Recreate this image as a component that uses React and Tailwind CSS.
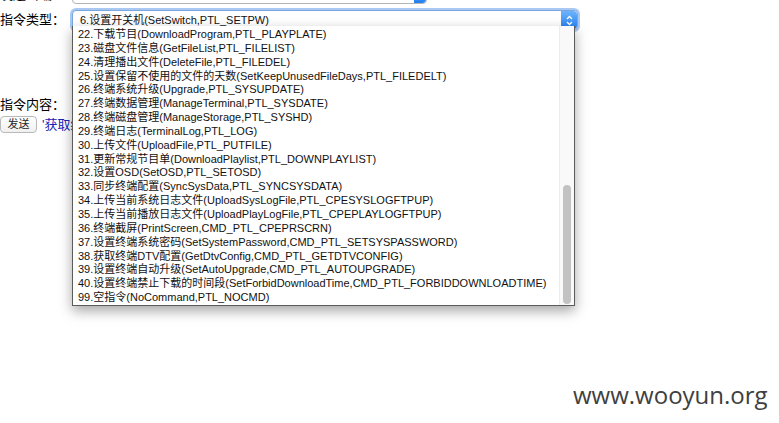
import React from 'react'

const items = [
  '22.下载节目(DownloadProgram,PTL_PLAYPLATE)',
  '23.磁盘文件信息(GetFileList,PTL_FILELIST)',
  '24.清理播出文件(DeleteFile,PTL_FILEDEL)',
  '25.设置保留不使用的文件的天数(SetKeepUnusedFileDays,PTL_FILEDELT)',
  '26.终端系统升级(Upgrade,PTL_SYSUPDATE)',
  '27.终端数据管理(ManageTerminal,PTL_SYSDATE)',
  '28.终端磁盘管理(ManageStorage,PTL_SYSHD)',
  '29.终端日志(TerminalLog,PTL_LOG)',
  '30.上传文件(UploadFile,PTL_PUTFILE)',
  '31.更新常规节目单(DownloadPlaylist,PTL_DOWNPLAYLIST)',
  '32.设置OSD(SetOSD,PTL_SETOSD)',
  '33.同步终端配置(SyncSysData,PTL_SYNCSYSDATA)',
  '34.上传当前系统日志文件(UploadSysLogFile,PTL_CPESYSLOGFTPUP)',
  '35.上传当前播放日志文件(UploadPlayLogFile,PTL_CPEPLAYLOGFTPUP)',
  '36.终端截屏(PrintScreen,CMD_PTL_CPEPRSCRN)',
  '37.设置终端系统密码(SetSystemPassword,CMD_PTL_SETSYSPASSWORD)',
  '38.获取终端DTV配置(GetDtvConfig,CMD_PTL_GETDTVCONFIG)',
  '39.设置终端自动升级(SetAutoUpgrade,CMD_PTL_AUTOUPGRADE)',
  '40.设置终端禁止下载的时间段(SetForbidDownloadTime,CMD_PTL_FORBIDDOWNLOADTIME)',
  '99.空指令(NoCommand,PTL_NOCMD)',
]

const sans = "font-['Liberation_Sans','Noto_Sans_CJK_SC',sans-serif]"

// the little blue up/down button of a mac select
function Arrows({ cls }) {
  return (
    <div className={'flex items-center justify-center rounded-r-[4px] bg-gradient-to-b from-[#6cb3fa] to-[#1f7ef0] ' + cls}>
      <svg width="7" height="11" viewBox="0 0 7 11" fill="none" stroke="white" strokeWidth="1.4">
        <path d="M1 4 L3.5 1.5 L6 4" />
        <path d="M1 7 L3.5 9.5 L6 7" />
      </svg>
    </div>
  )
}

export default function App() {
  return (
    <div className={'relative w-[779px] h-[423px] overflow-hidden bg-white text-black ' + sans}>
      {/* row 1, mostly scrolled out */}
      <div className="flex items-center mt-[-15px] h-[19px]">
        <div className="w-[72px] text-[13px] leading-[19px]">发送终端：</div>
        <div className="flex h-[19px] w-[355px] items-stretch rounded-[4px] border border-[#b5b5b5] bg-white">
          <div className="flex-1 pl-[7px] text-[11px] leading-[17px] text-[#222]">10.0.1.215-10.00(在线运行终端)</div>
          <Arrows cls="w-[12px]" />
        </div>
      </div>

      {/* row 2 */}
      <div className="flex items-center mt-[6px] h-[20px]">
        <div className="w-[72px] text-[13px] leading-[20px]">指令类型：</div>
        <div className="flex h-[20px] w-[506px] items-stretch rounded-[4px] border border-[#7aa6e0] bg-white shadow-[0_0_0_2px_#a9c9f3]">
          <div className="flex-1 pl-[7px] text-[11px] leading-[18px] text-[#111]">6.设置开关机(SetSwitch,PTL_SETPW)</div>
          <Arrows cls="w-[16px]" />
        </div>
      </div>

      {/* content row */}
      <div className="mt-[66px] text-[13px] leading-[18px] w-[72px]">指令内容：</div>
      <div className="flex items-center gap-[5px] mt-[1px]">
        <button className="h-[17px] w-[37px] rounded-[4px] border border-[#b9b9b9] bg-gradient-to-b from-white to-[#f0f0f0] text-[11px] leading-[15px] text-[#222]">发送</button>
        <span className="text-[13px] text-[#1c22b5]">'获取终端信息</span>
      </div>

      {/* open dropdown list */}
      <div className="absolute left-[72px] top-[26px] w-[503px] h-[280px] flex bg-white border border-t-0 border-[#5b5b5b] shadow-[0_5px_12px_rgba(0,0,0,0.35)]">
        <div className="flex-1 pt-[2px] pl-[5px]">
          {items.map(t => (
            <div key={t} className="h-[13.85px] text-[11px] leading-[13.85px] text-[#111] whitespace-nowrap">{t}</div>
          ))}
        </div>
        <div className="w-[15px] flex flex-col bg-[#f9f9f9] border-l border-[#ececec] pt-[159px] pb-[1px] items-center">
          <div className="w-[8px] flex-1 rounded-full bg-[#c2c2c2]" />
        </div>
      </div>

      {/* watermark */}
      <div className="absolute left-[573px] top-[379px] text-[24px] leading-[32px] text-[#404040] font-['Open_Sans',sans-serif]">www.wooyun.org</div>
    </div>
  )
}
